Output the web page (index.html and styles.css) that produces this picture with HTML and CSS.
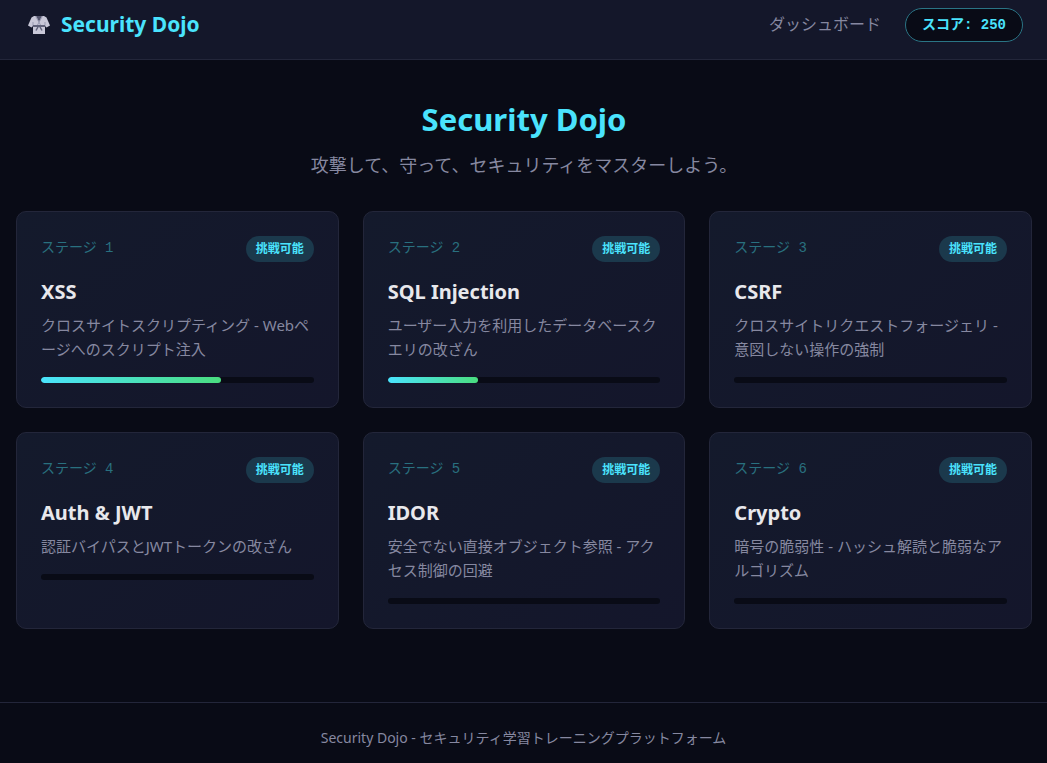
FILE: index.html
```html
<!DOCTYPE html>
<html lang="ja">

<head>
  <meta charset="utf-8">
  <meta name="viewport" content="width=device-width, initial-scale=1">
  <title>Security Dojo</title>
  <link rel="stylesheet" href="styles.css">
</head>

<body>

  <header class="navbar">
    <a class="brand" href="#">
      <svg class="brand-icon" viewBox="0 0 22 18" aria-hidden="true">
        <path fill="#c9c8d8" d="M6 0h10l2.500 1.500L22 9.500l-3.500 2-1.500-1.500v8H5v-8l-1.500 1.500L0 9.500 3.500 1.500z"/>
        <path fill="#55566e" d="M8 0h6l-3 6z"/>
        <path fill="none" stroke="#9a9bb2" d="M5 10V6M17 10V6M7.500 0l5 9M14.500 0l-5 9"/>
        <path fill="#60627a" d="M5 9h12v2H5z"/>
        <path fill="none" stroke="#60627a" stroke-width="1.500" d="M10.500 10L8 14.500M11.500 10l2.500 4.500"/>
      </svg>
      <span>Security Dojo</span>
    </a>
    <nav class="nav-links">
      <a class="nav-link" href="#">ダッシュボード</a>
      <span class="score">スコア: 250</span>
    </nav>
  </header>

  <main class="container">
    <section class="hero">
      <h1>Security Dojo</h1>
      <p>攻撃して、守って、セキュリティをマスターしよう。</p>
    </section>

    <section class="stages">
      <a class="card" href="#xss">
        <div class="card-header">
          <span class="stage">ステージ 1</span>
          <span class="badge">挑戦可能</span>
        </div>
        <h2>XSS</h2>
        <p>クロスサイトスクリプティング - Webページへのスクリプト注入</p>
        <div class="progress"><div class="progress-fill" style="width: 66%"></div></div>
      </a>

      <a class="card" href="#sqli">
        <div class="card-header">
          <span class="stage">ステージ 2</span>
          <span class="badge">挑戦可能</span>
        </div>
        <h2>SQL Injection</h2>
        <p>ユーザー入力を利用したデータベースクエリの改ざん</p>
        <div class="progress"><div class="progress-fill" style="width: 33%"></div></div>
      </a>

      <a class="card" href="#csrf">
        <div class="card-header">
          <span class="stage">ステージ 3</span>
          <span class="badge">挑戦可能</span>
        </div>
        <h2>CSRF</h2>
        <p>クロスサイトリクエストフォージェリ - 意図しない操作の強制</p>
        <div class="progress"><div class="progress-fill" style="width: 0%"></div></div>
      </a>

      <a class="card" href="#auth">
        <div class="card-header">
          <span class="stage">ステージ 4</span>
          <span class="badge">挑戦可能</span>
        </div>
        <h2>Auth &amp; JWT</h2>
        <p>認証バイパスとJWTトークンの改ざん</p>
        <div class="progress"><div class="progress-fill" style="width: 0%"></div></div>
      </a>

      <a class="card" href="#idor">
        <div class="card-header">
          <span class="stage">ステージ 5</span>
          <span class="badge">挑戦可能</span>
        </div>
        <h2>IDOR</h2>
        <p>安全でない直接オブジェクト参照 - アクセス制御の回避</p>
        <div class="progress"><div class="progress-fill" style="width: 0%"></div></div>
      </a>

      <a class="card" href="#crypto">
        <div class="card-header">
          <span class="stage">ステージ 6</span>
          <span class="badge">挑戦可能</span>
        </div>
        <h2>Crypto</h2>
        <p>暗号の脆弱性 - ハッシュ解読と脆弱なアルゴリズム</p>
        <div class="progress"><div class="progress-fill" style="width: 0%"></div></div>
      </a>
    </section>
  </main>

  <footer class="footer">
    <p>Security Dojo - セキュリティ学習トレーニングプラットフォーム</p>
  </footer>

</body>

</html>
```

FILE: styles.css
```css
:root {
  --bg: #090b16;
  --surface: #14172a;
  --border: #23263a;
  --cyan: #4ae3fd;
  --green: #4ade80;
  --text: #e8e8ec;
  --muted: #8688a0;
  --mono: "Liberation Mono", "Noto Sans CJK JP", monospace;
}

* {
  box-sizing: border-box;
  margin: 0;
}

body {
  background: var(--bg);
  color: var(--text);
  font-family: "Noto Sans", "Noto Sans CJK JP", sans-serif;
}

a {
  color: inherit;
  text-decoration: none;
}

.navbar {
  display: flex;
  justify-content: space-between;
  align-items: flex-start;
  padding: 8px 24px 17px 28px;
  background: var(--surface);
  border-bottom: 1px solid var(--border);
}

.brand {
  display: flex;
  align-items: center;
  gap: 11px;
  color: var(--cyan);
  font-size: 21px;
  font-weight: 700;
  line-height: 33px;
}

.brand-icon {
  width: 22px;
  height: 18px;
}

.nav-links {
  display: flex;
  align-items: flex-start;
  gap: 24px;
}

.nav-link {
  color: var(--muted);
  font-size: 16px;
  line-height: 32px;
}

.score {
  padding: 0 16px;
  background: var(--bg);
  border: 1px solid #2a7485;
  border-radius: 20px;
  color: var(--cyan);
  font-family: var(--mono);
  font-size: 14px;
  font-weight: 700;
  line-height: 32px;
}

.container {
  padding: 37px 15px 73px 16px;
}

.hero {
  margin-bottom: 31px;
  text-align: center;
}

.hero h1 {
  margin-bottom: 9px;
  color: var(--cyan);
  font-size: 31px;
  line-height: 45px;
}

.hero p {
  color: var(--muted);
  font-size: 18px;
  line-height: 29px;
}

.stages {
  display: grid;
  grid-template-columns: repeat(3, 1fr);
  gap: 24px;
}

.card {
  padding: 24px;
  background: linear-gradient(145deg, #141a2c, #14162b);
  border: 1px solid var(--border);
  border-radius: 10px;
}

.card-header {
  display: flex;
  justify-content: space-between;
  align-items: flex-start;
  margin-bottom: 14px;
}

.stage {
  color: #29707f;
  font-family: var(--mono);
  font-size: 14px;
  line-height: 24px;
}

.badge {
  padding: 0 10px;
  background: #1b394c;
  border-radius: 13px;
  color: var(--cyan);
  font-size: 12px;
  font-weight: 700;
  line-height: 26px;
}

.card h2 {
  margin-bottom: 5px;
  font-size: 20px;
  line-height: 32px;
}

.card p {
  margin-bottom: 16px;
  color: var(--muted);
  font-size: 15px;
  line-height: 24px;
}

.progress {
  height: 6px;
  background: var(--bg);
  border-radius: 3px;
  overflow: hidden;
}

.progress-fill {
  height: 100%;
  background: linear-gradient(90deg, var(--cyan), var(--green));
  border-radius: 3px;
}

.footer {
  padding: 24px 16px 14px;
  border-top: 1px solid var(--border);
  color: var(--muted);
  font-size: 14px;
  line-height: 22px;
  text-align: center;
}

@media (max-width: 800px) {
  .stages {
    grid-template-columns: 1fr;
  }
}
```
